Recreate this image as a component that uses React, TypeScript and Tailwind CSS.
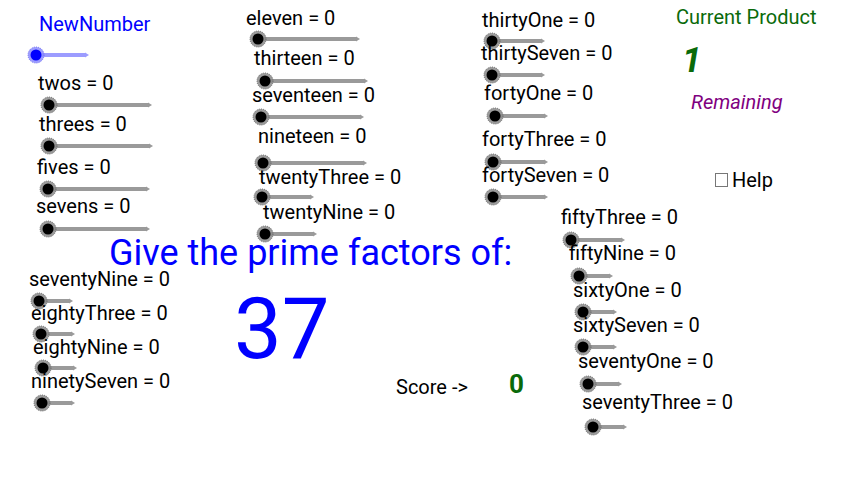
import React from 'react';

type Slider = {
  name: string;
  x: number;
  base: number;
  kx: number;
  ky: number;
  end: number;
};

// label position (x, baseline) and slider knob centre + line end, as read off the applet canvas
const sliders: Slider[] = [
  { name: 'twos', x: 38, base: 90, kx: 49, ky: 105, end: 152 },
  { name: 'threes', x: 39, base: 131, kx: 49, ky: 146, end: 153 },
  { name: 'fives', x: 37, base: 174, kx: 48, ky: 189, end: 150 },
  { name: 'sevens', x: 36, base: 213, kx: 48, ky: 229, end: 150 },
  { name: 'eleven', x: 246, base: 25, kx: 258, ky: 39, end: 360 },
  { name: 'thirteen', x: 254, base: 65, kx: 265, ky: 81, end: 368 },
  { name: 'seventeen', x: 252, base: 102, kx: 261, ky: 117, end: 364 },
  { name: 'nineteen', x: 258, base: 143, kx: 263, ky: 163, end: 367 },
  { name: 'twentyThree', x: 259, base: 184, kx: 262, ky: 197, end: 314 },
  { name: 'twentyNine', x: 263, base: 219, kx: 265, ky: 234, end: 317 },
  { name: 'thirtyOne', x: 482, base: 27, kx: 492, ky: 41, end: 545 },
  { name: 'thirtySeven', x: 481, base: 60, kx: 492, ky: 75, end: 545 },
  { name: 'fortyOne', x: 484, base: 100, kx: 495, ky: 116, end: 548 },
  { name: 'fortyThree', x: 482, base: 146, kx: 493, ky: 162, end: 548 },
  { name: 'fortySeven', x: 482, base: 182, kx: 493, ky: 197, end: 548 },
  { name: 'fiftyThree', x: 561, base: 224, kx: 571, ky: 240, end: 625 },
  { name: 'fiftyNine', x: 569, base: 260, kx: 579, ky: 276, end: 613 },
  { name: 'sixtyOne', x: 573, base: 297, kx: 583, ky: 312, end: 617 },
  { name: 'sixtySeven', x: 573, base: 332, kx: 583, ky: 347, end: 617 },
  { name: 'seventyOne', x: 578, base: 368, kx: 588, ky: 384, end: 622 },
  { name: 'seventyThree', x: 582, base: 409, kx: 593, ky: 427, end: 627 },
  { name: 'seventyNine', x: 29, base: 286, kx: 39, ky: 301, end: 73 },
  { name: 'eightyThree', x: 31, base: 320, kx: 41, ky: 334, end: 75 },
  { name: 'eightyNine', x: 33, base: 354, kx: 43, ky: 368, end: 77 },
  { name: 'ninetySeven', x: 31, base: 388, kx: 42, ky: 403, end: 75 },
];

const Label: React.FC<{
  x: number;
  base: number;
  size: number;
  className?: string;
  children: React.ReactNode;
}> = ({ x, base, size, className = '', children }) => (
  <div
    className={`absolute whitespace-nowrap leading-none ${className}`}
    style={{ left: x, top: base - size * 0.8415, fontSize: size }}
  >
    {children}
  </div>
);

const Knob: React.FC<{ s: { kx: number; ky: number; end: number }; blue?: boolean }> = ({ s, blue }) => {
  const line = blue ? '#9c9cff' : '#9a9a9a';
  return (
    <g>
      <line x1={s.kx} y1={s.ky} x2={s.end - 3} y2={s.ky} stroke={line} strokeWidth={4} />
      <polygon points={`${s.end - 4},${s.ky - 2.5} ${s.end},${s.ky} ${s.end - 4},${s.ky + 2.5}`} fill={line} />
      <circle cx={s.kx} cy={s.ky} r={8} fill={blue ? '#8c8cff' : '#8a8a8a'} opacity={0.85} />
      <circle cx={s.kx} cy={s.ky} r={8} fill="none" stroke={blue ? '#6c6cf0' : '#666'} strokeWidth={1} strokeDasharray="1 1.2" />
      <circle cx={s.kx} cy={s.ky} r={5.5} fill={blue ? '#0000ff' : '#000'} />
    </g>
  );
};

export default function App() {
  return (
    <div
      className="relative w-[853px] h-[482px] overflow-hidden bg-white text-black"
      style={{ fontFamily: 'Roboto, "Liberation Sans", sans-serif' }}
    >
      <svg className="absolute inset-0" width={853} height={482}>
        <Knob s={{ kx: 36, ky: 55, end: 89 }} blue />
        {sliders.map((s) => (
          <Knob key={s.name} s={s} />
        ))}
      </svg>

      <Label x={39} base={31} size={20} className="text-[#0000ff]">NewNumber</Label>
      {sliders.map((s) => (
        <Label key={s.name} x={s.x} base={s.base} size={20}>
          {s.name} = 0
        </Label>
      ))}

      <Label x={109} base={265} size={36} className="text-[#0000ff]">Give the prime factors of:</Label>
      <Label x={234} base={359} size={85} className="text-[#0000ff]">37</Label>

      <Label x={396} base={394} size={20}>Score -&gt;</Label>
      <Label x={509} base={393} size={26} className="font-bold text-[#0a6a0a]">0</Label>

      <Label x={676} base={24} size={20} className="text-[#0a6a0a]">Current Product</Label>
      <Label x={682} base={72} size={35} className="font-bold italic text-[#0a6a0a]">1</Label>
      <Label x={691} base={109} size={20} className="italic text-[#800080]">Remaining</Label>

      <div className="absolute left-[715px] top-[173px] w-[13px] h-[14px] border border-[#777] bg-white" />
      <Label x={732} base={187} size={20}>Help</Label>
    </div>
  );
}
